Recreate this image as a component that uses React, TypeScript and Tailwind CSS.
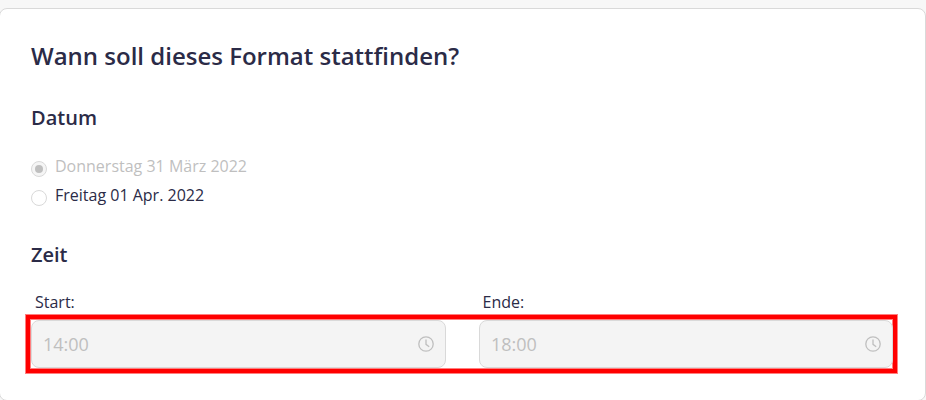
import { clsx } from "clsx"

const dates = [
  { label: "Donnerstag 31 März 2022", checked: true, disabled: true },
  { label: "Freitag 01 Apr. 2022", checked: false, disabled: false },
]

export default function App() {
  return (
    <div className="h-[400px] w-[926px] overflow-hidden bg-[#f7f7f7] pt-2 font-['Open_Sans',sans-serif] text-[#2b2b47] antialiased">
      <section className="-ml-px h-[393px] w-[927px] rounded-lg border border-[#d9d9d9] bg-white pt-[31px] pl-[31px]">
        <h1 className="text-2xl leading-8 font-semibold">Wann soll dieses Format stattfinden?</h1>

        <h2 className="mt-8 text-xl leading-7 font-semibold">Datum</h2>
        <div className="mt-[19px]">
          {dates.map((date) => (
            <DateOption key={date.label} {...date} />
          ))}
        </div>

        <h2 className="mt-8 text-xl leading-7 font-semibold">Zeit</h2>
        <div className="mt-[21px] mb-px flex pl-1 text-base leading-6">
          <span className="w-[447.5px]">Start:</span>
          <span>Ende:</span>
        </div>
        <div className="-ml-[5px] flex h-[58px] w-[871px] gap-[33px] border-4 border-[#ff0000] p-px ring-1 ring-[#ff0000]/50 inset-ring inset-ring-[#ff0000]/50">
          <TimeField value="14:00" className="w-[415px]" />
          <TimeField value="18:00" className="w-[414px]" />
        </div>
      </section>
    </div>
  )
}

function DateOption({ label, checked, disabled }: { label: string; checked: boolean; disabled: boolean }) {
  return (
    <div className="flex h-[29px] items-center">
      <span
        className={clsx(
          "mt-[7px] mr-2 flex size-4 items-center justify-center rounded-full border border-[#d9d9d9]",
          disabled && "bg-[#f5f5f5]"
        )}
      >
        {checked && <span className="size-2 rounded-full bg-[#bfbfbf]" />}
      </span>
      <span className={clsx("text-base leading-6", disabled && "text-[#bfbfbf]")}>{label}</span>
    </div>
  )
}

function TimeField({ value, className }: { value: string; className: string }) {
  return (
    <div
      className={clsx(
        "flex h-12 shrink-0 items-center justify-between rounded-lg border border-[#d9d9d9] bg-[#f4f4f4] pr-[11px] pl-[11px] text-lg text-[#bfbfbf]",
        className
      )}
    >
      <span>{value}</span>
      <ClockIcon />
    </div>
  )
}

function ClockIcon() {
  return (
    <svg className="size-4" viewBox="0 0 16 16" fill="none" stroke="currentColor" strokeWidth="1.3">
      <circle cx="8" cy="8" r="7.2" />
      <path d="M8 3.6v4.8l3.2 2.3" />
    </svg>
  )
}
